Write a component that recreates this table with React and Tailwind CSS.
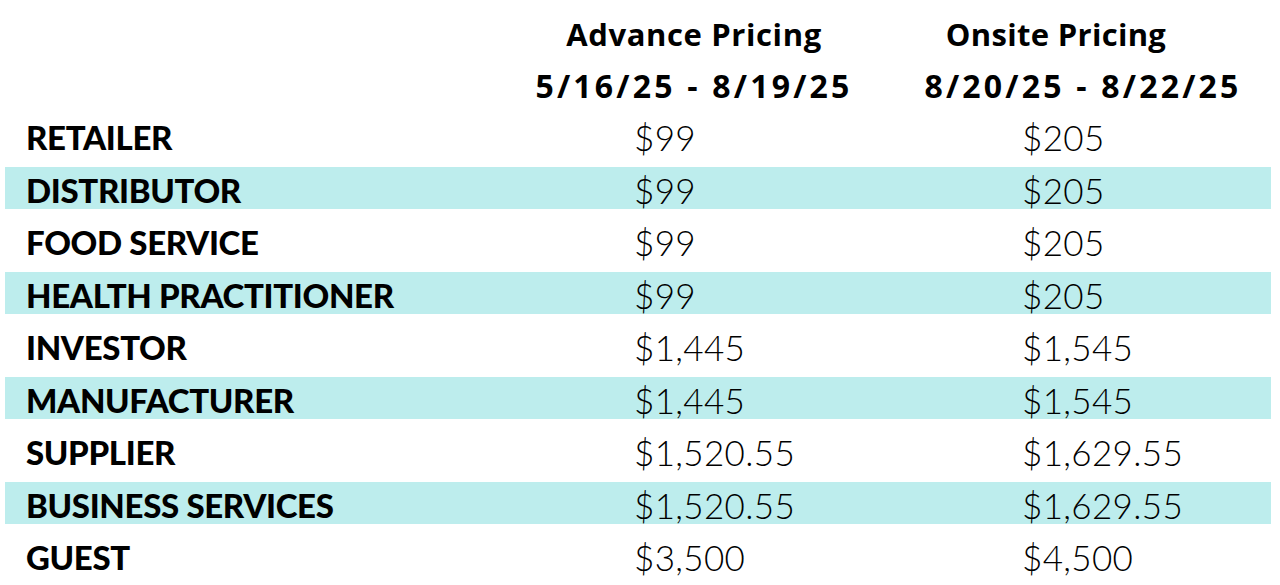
// Pricing table: label / advance / onsite, with alternating teal bands

const ROWS = [
	{ label: "RETAILER", advance: "$99", onsite: "$205" },
	{ label: "DISTRIBUTOR", advance: "$99", onsite: "$205" },
	{ label: "FOOD SERVICE", advance: "$99", onsite: "$205" },
	{ label: "HEALTH PRACTITIONER", advance: "$99", onsite: "$205" },
	{ label: "INVESTOR", advance: "$1,445", onsite: "$1,545" },
	{ label: "MANUFACTURER", advance: "$1,445", onsite: "$1,545" },
	{ label: "SUPPLIER", advance: "$1,520.55", onsite: "$1,629.55" },
	{ label: "BUSINESS SERVICES", advance: "$1,520.55", onsite: "$1,629.55" },
	{ label: "GUEST", advance: "$3,500", onsite: "$4,500" },
]

export default function App() {
	return (
		<div
			className="w-[1280px] h-[585px] bg-white text-black overflow-hidden"
			style={{ fontFamily: "Lato, 'Liberation Sans', sans-serif" }}
		>
			{/* ── Header ─────────────────────────────── */}
			<div
				className="flex h-[109px] pt-[9px] font-bold text-[31px] leading-[51px] whitespace-nowrap"
				style={{ fontFamily: "'Open Sans', Lato, sans-serif" }}
			>
				<div className="ml-[527px] w-[334px] text-center">
					<div className="tracking-[0.02em]">Advance Pricing</div>
					<div className="text-[32px] tracking-[0.1em]">5/16/25 - 8/19/25</div>
				</div>
				<div className="ml-[55px] w-[334px] text-center">
					<div className="pr-[54px] tracking-[0.01em]">Onsite Pricing</div>
					<div className="text-[32px] tracking-[0.1em]">8/20/25 - 8/22/25</div>
				</div>
			</div>

			{/* ── Rows ───────────────────────────────── */}
			<div className="flex flex-col">
				{ROWS.map((row, i) => (
					<div key={row.label} className="h-[52.5px] py-[5px] pl-[5px] pr-[9px]">
						<div
							className={
								"grid grid-cols-[629px_388px_1fr] items-start h-full " +
								(i % 2 === 1 ? "bg-[#bdeded]" : "")
							}
						>
							<span className="pl-[21px] pt-[5px] font-black text-[33px] leading-[36px] tracking-[-0.01em]">
								{row.label}
							</span>
							<span className="pt-[5px] font-light text-[35px] leading-[36px] tracking-[0.01em]">
								{row.advance}
							</span>
							<span className="pt-[5px] font-light text-[35px] leading-[36px] tracking-[0.01em]">
								{row.onsite}
							</span>
						</div>
					</div>
				))}
			</div>
		</div>
	)
}
